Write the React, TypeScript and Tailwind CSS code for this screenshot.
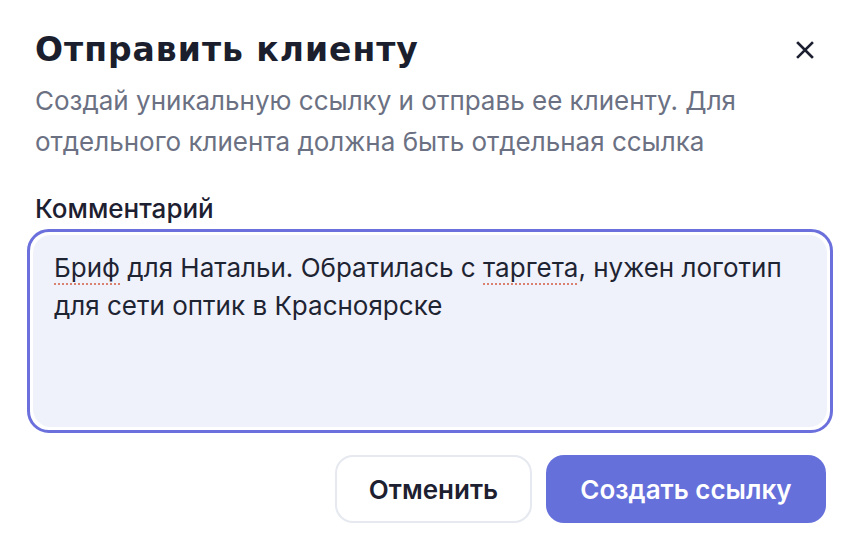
export default function App() {
  return (
    <div className="min-h-screen w-full bg-white font-['Inter','Noto_Sans',sans-serif] text-[#1f2433]">
      <div className="flex flex-col px-[35px] pt-[30px]">
        <div className="flex items-center justify-between">
          <h1 className="font-['DejaVu_Sans','Noto_Sans',sans-serif] text-[33px] font-bold leading-[40px] tracking-[1px] text-[#1b1e2d]">
            Отправить клиенту
          </h1>
          <button className="flex h-[30px] w-[30px] items-center justify-center text-[#1d2030]">
            <svg width="18" height="18" viewBox="0 0 18 18" fill="none">
              <path d="M2 2L16 16M16 2L2 16" stroke="currentColor" strokeWidth="2.6" strokeLinecap="square" />
            </svg>
          </button>
        </div>

        <p className="mt-[10px] text-[26px] leading-[41px] text-[#6b7183]">
          Создай уникальную ссылку и отправь ее клиенту. Для
          <br />
          отдельного клиента должна быть отдельная ссылка
        </p>

        <label className="mt-[32px] text-[26px] font-medium leading-[30px] text-[#1d2030]">Комментарий</label>

        <div className="-ml-[8px] mt-[5px] w-[806px] rounded-[22px] border-[3px] border-[#6b70dc] p-[3px]">
          <div className="h-[192px] rounded-[18px] bg-[#eff2fb] px-[21px] pt-[14px] text-[26px] leading-[38px] text-[#1f2433]">
            <span className="underline decoration-[#d9826f] decoration-dotted decoration-2 underline-offset-[6px]">Бриф</span>{" "}
            для Натальи. Обратилась с{" "}
            <span className="underline decoration-[#d9826f] decoration-dotted decoration-2 underline-offset-[6px]">таргета</span>, нужен логотип
            <br />
            для сети оптик в Красноярске
          </div>
        </div>

        <div className="mt-[22px] flex justify-end gap-[14px]">
          <button className="h-[68px] w-[197px] rounded-[18px] border-2 border-[#e6e9ef] bg-white text-[26px] font-semibold text-[#1d2030]">
            Отменить
          </button>
          <button className="mr-[-6px] h-[68px] w-[280px] rounded-[18px] bg-[#6570db] text-[26px] font-semibold text-white">
            Создать ссылку
          </button>
        </div>
      </div>
    </div>
  )
}
